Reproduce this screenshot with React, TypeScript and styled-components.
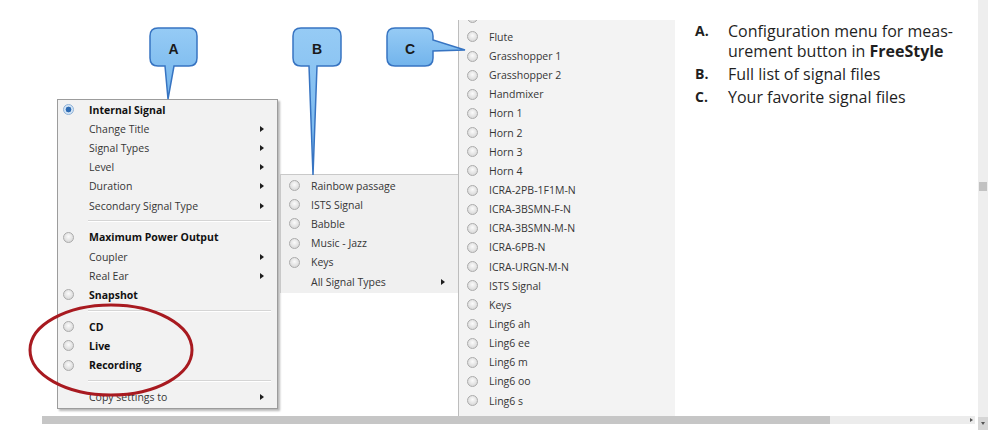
import React from 'react';
import styled, { createGlobalStyle } from 'styled-components';

type MenuEntry =
  | { kind: 'item'; label: string; bold?: boolean; radio?: 'on' | 'off'; sub?: boolean }
  | { kind: 'sep' };

const menuA: MenuEntry[] = [
  { kind: 'item', label: 'Internal Signal', bold: true, radio: 'on' },
  { kind: 'item', label: 'Change Title', sub: true },
  { kind: 'item', label: 'Signal Types', sub: true },
  { kind: 'item', label: 'Level', sub: true },
  { kind: 'item', label: 'Duration', sub: true },
  { kind: 'item', label: 'Secondary Signal Type', sub: true },
  { kind: 'sep' },
  { kind: 'item', label: 'Maximum Power Output', bold: true, radio: 'off' },
  { kind: 'item', label: 'Coupler', sub: true },
  { kind: 'item', label: 'Real Ear', sub: true },
  { kind: 'item', label: 'Snapshot', bold: true, radio: 'off' },
  { kind: 'sep' },
  { kind: 'item', label: 'CD', bold: true, radio: 'off' },
  { kind: 'item', label: 'Live', bold: true, radio: 'off' },
  { kind: 'item', label: 'Recording', bold: true, radio: 'off' },
  { kind: 'sep' },
  { kind: 'item', label: 'Copy settings to', sub: true },
];

const menuB: MenuEntry[] = [
  { kind: 'item', label: 'Rainbow passage', radio: 'off' },
  { kind: 'item', label: 'ISTS Signal', radio: 'off' },
  { kind: 'item', label: 'Babble', radio: 'off' },
  { kind: 'item', label: 'Music - Jazz', radio: 'off' },
  { kind: 'item', label: 'Keys', radio: 'off' },
  { kind: 'item', label: 'All Signal Types', sub: true },
];

// first entry is scrolled out of view, only its radio peeks out
const signalFiles = [
  '',
  'Flute',
  'Grasshopper 1',
  'Grasshopper 2',
  'Handmixer',
  'Horn 1',
  'Horn 2',
  'Horn 3',
  'Horn 4',
  'ICRA-2PB-1F1M-N',
  'ICRA-3BSMN-F-N',
  'ICRA-3BSMN-M-N',
  'ICRA-6PB-N',
  'ICRA-URGN-M-N',
  'ISTS Signal',
  'Keys',
  'Ling6 ah',
  'Ling6 ee',
  'Ling6 m',
  'Ling6 oo',
  'Ling6 s',
];

const GlobalStyle = createGlobalStyle`
  html, body {
    margin: 0;
    padding: 0;
    background: #ffffff;
  }
`;

const Frame = styled.div`
  display: flex;
  width: 1000px;
  height: 442px;
  background: #ffffff;
  overflow: hidden;
  font-family: "Open Sans", "Noto Sans", sans-serif;
`;

const Main = styled.div`
  width: 978px;
  display: flex;
  flex-direction: column;
`;

const Canvas = styled.div`
  position: relative;
  height: 416px;
  display: flex;
  align-items: flex-start;
  overflow: hidden;
`;

const MenuA = styled.div`
  margin: 99px 0 0 57px;
  width: 221px;
  height: 310px;
  box-sizing: border-box;
  padding: 0 0 1px;
  background: #f2f2f2;
  border: 1px solid #9c9c9c;
  box-shadow: 2px 2px 2px rgba(0, 0, 0, 0.28);
`;

const MenuB = styled.div`
  margin: 174px 0 0 2px;
  width: 178px;
  height: 119px;
  box-sizing: border-box;
  padding-top: 1px;
  background: #f0f0f0;
  border-top: 1px solid #c9c9c9;
  border-left: 1px solid #c9c9c9;
`;

const ListC = styled.div`
  margin-top: 20px;
  width: 217px;
  height: 396px;
  box-sizing: border-box;
  background: #f3f3f3;
  border-left: 1px solid #bdbdbd;
  overflow: hidden;
`;

const ListInner = styled.div`
  margin-top: -11.8px;
`;

const Row = styled.div<{ $lead: number; $pad: number; $h: number }>`
  display: grid;
  grid-template-columns: ${p => p.$lead}px 1fr auto;
  align-items: center;
  height: ${p => p.$h}px;
  padding-right: 13px;
  & > span:first-child {
    padding-left: ${p => p.$pad}px;
  }
`;

const Label = styled.span<{ $bold?: boolean }>`
  font-size: 10.5px;
  font-weight: ${p => (p.$bold ? 700 : 400)};
  color: ${p => (p.$bold ? '#111111' : '#363636')};
  white-space: nowrap;
`;

const Slot = styled.span`
  display: flex;
  align-items: center;
`;

const Radio = styled.span<{ $on?: boolean }>`
  width: 11px;
  height: 11px;
  box-sizing: border-box;
  border-radius: 50%;
  border: 1px solid ${p => (p.$on ? '#8fb2d8' : '#ababab')};
  background: ${p =>
    p.$on
      ? 'radial-gradient(circle, #2d6bb3 0 2.6px, #d4e5f6 3.2px)'
      : 'radial-gradient(circle at 50% 40%, #fbfbfb, #cfcfcf)'};
`;

const SubArrow = styled.span`
  width: 0;
  height: 0;
  border-left: 4px solid #1e1e1e;
  border-top: 3px solid transparent;
  border-bottom: 3px solid transparent;
`;

const Separator = styled.div`
  height: 12.6px;
  display: flex;
  align-items: center;
  padding: 0 6px 0 30px;
  &::after {
    content: '';
    flex: 1;
    height: 1px;
    background: #d5d5d5;
    border-bottom: 1px solid #ffffff;
  }
`;

const Notes = styled.ol`
  list-style: none;
  margin: 21px 0 0 20px;
  padding: 0;
  font-size: 16px;
  line-height: 20px;
  color: #1f1f1f;
`;

const Note = styled.li`
  display: grid;
  grid-template-columns: 33px 1fr;
  margin-bottom: 3px;
  white-space: nowrap;
`;

const NoteKey = styled.span`
  font-weight: 700;
  font-size: 14px;
`;

const NoteLine = styled.span`
  display: block;
`;

const Overlay = styled.svg`
  position: absolute;
  left: 0;
  top: 0;
  pointer-events: none;
`;

const HScroll = styled.div`
  margin-left: 42px;
  width: 933px;
  height: 8px;
  display: flex;
  align-items: center;
  background: #ececec;
`;

const HThumb = styled.div`
  width: 788px;
  height: 100%;
  background: #c6c6c6;
`;

const VScroll = styled.div`
  width: 10px;
  height: 430px;
  display: flex;
  flex-direction: column;
  align-items: center;
  background: #eeeeee;
`;

const VThumb = styled.div`
  margin-top: 182px;
  width: 8px;
  height: 9px;
  background: #c2c2c2;
`;

const VButton = styled.div`
  margin-top: auto;
  width: 10px;
  height: 13px;
  display: flex;
  align-items: center;
  justify-content: center;
  background: #d6d6d6;
  &::after {
    content: '';
    border-top: 3px solid #555;
    border-left: 2px solid transparent;
    border-right: 2px solid transparent;
  }
`;

const HEnd = styled.div`
  margin-left: auto;
  margin-right: 2px;
  border-left: 3px solid #555;
  border-top: 2px solid transparent;
  border-bottom: 2px solid transparent;
`;

const MenuRows = ({ entries, lead, pad }: { entries: MenuEntry[]; lead: number; pad: number }) => (
  <>
    {entries.map((e, i) =>
      e.kind === 'sep' ? (
        <Separator key={i} />
      ) : (
        <Row key={i} $lead={lead} $pad={pad} $h={19.2}>
          <Slot>{e.radio && <Radio $on={e.radio === 'on'} />}</Slot>
          <Label $bold={e.bold}>{e.label}</Label>
          <Slot>{e.sub && <SubArrow />}</Slot>
        </Row>
      )
    )}
  </>
);

const calloutStroke = '#3774c2';

const App = () => {
  return (
    <>
      <GlobalStyle />
      <Frame>
        <Main>
          <Canvas>
            <MenuA>
              <MenuRows entries={menuA} lead={31} pad={5} />
            </MenuA>
            <MenuB>
              <MenuRows entries={menuB} lead={30} pad={8} />
            </MenuB>
            <ListC>
              <ListInner>
                {signalFiles.map((name, i) => (
                  <Row key={i} $lead={30} $pad={8} $h={19.15}>
                    <Slot>
                      <Radio />
                    </Slot>
                    <Label>{name}</Label>
                    <Slot />
                  </Row>
                ))}
              </ListInner>
            </ListC>
            <Notes>
              <Note>
                <NoteKey>A.</NoteKey>
                <span>
                  <NoteLine>Configuration menu for meas-</NoteLine>
                  <NoteLine>
                    urement button in <b>FreeStyle</b>
                  </NoteLine>
                </span>
              </Note>
              <Note>
                <NoteKey>B.</NoteKey>
                <span>Full list of signal files</span>
              </Note>
              <Note>
                <NoteKey>C.</NoteKey>
                <span>Your favorite signal files</span>
              </Note>
            </Notes>

            <Overlay width="978" height="416" viewBox="0 0 978 416">
              <defs>
                <linearGradient id="callout" x1="0" y1="0" x2="0" y2="1">
                  <stop offset="0" stopColor="#96cbf5" />
                  <stop offset="1" stopColor="#72b4ec" />
                </linearGradient>
              </defs>
              <path
                d="M158 28 H189 Q197 28 197 36 V58 Q197 66 189 66 H174 L168 99 L165 66 H158 Q150 66 150 58 V36 Q150 28 158 28 Z"
                fill="url(#callout)"
                stroke={calloutStroke}
                strokeWidth="1.5"
              />
              <path
                d="M301 28 H333 Q341 28 341 36 V58 Q341 66 333 66 H317 L313 175 L309 66 H301 Q293 66 293 58 V36 Q293 28 301 28 Z"
                fill="url(#callout)"
                stroke={calloutStroke}
                strokeWidth="1.5"
              />
              <path
                d="M395 28 H425 Q433 28 433 36 V40 L465 50 L433 51 V58 Q433 66 425 66 H395 Q387 66 387 58 V36 Q387 28 395 28 Z"
                fill="url(#callout)"
                stroke={calloutStroke}
                strokeWidth="1.5"
              />
              <g fontFamily="'Liberation Sans', Arial, sans-serif" fontWeight="700" fontSize="14" fill="#1a1a1a" textAnchor="middle">
                <text x="173.5" y="54">A</text>
                <text x="317" y="54">B</text>
                <text x="410" y="54">C</text>
              </g>
              <ellipse cx="111" cy="350" rx="81" ry="45" fill="none" stroke="#a81a20" strokeWidth="3" />
            </Overlay>
          </Canvas>
          <HScroll>
            <HThumb />
            <HEnd />
          </HScroll>
        </Main>
        <VScroll>
          <VThumb />
          <VButton />
        </VScroll>
      </Frame>
    </>
  );
};

export default App;
